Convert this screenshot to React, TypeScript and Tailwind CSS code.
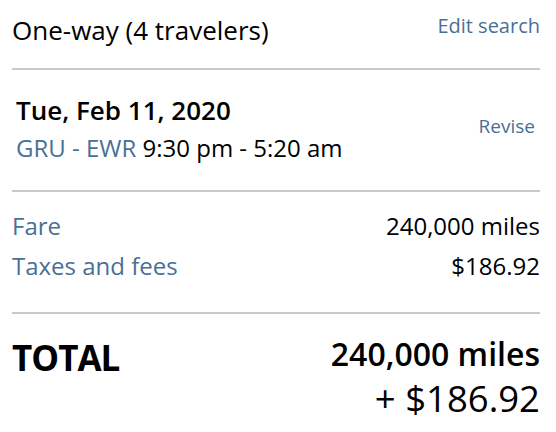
import React from 'react'

const font = { fontFamily: '"Open Sans", "Liberation Sans", sans-serif' }

const Divider = () => <div className="h-[2px] bg-[#c9c9c9]" />

export default function App() {
  return (
    <div className="w-[556px] h-[432px] bg-white pl-3 pr-4 text-black" style={font}>
      {/* header */}
      <div className="flex items-start justify-between h-[68px] pt-3">
        <h2 className="text-[26px] leading-[36px]">One-way (4 travelers)</h2>
        <a className="text-[20px] leading-[28px] text-[#4a6f96]">Edit search</a>
      </div>
      <Divider />

      {/* flight */}
      <div className="flex items-start justify-between h-[120px] pl-1 pr-[5px] pt-[23px]">
        <div>
          <p className="text-[26px] leading-[34px] font-semibold">Tue, Feb 11, 2020</p>
          <p className="text-[24px] leading-[34px] mt-1">
            <span className="text-[#4a6f96]">GRU - EWR</span> 9:30 pm - 5:20 am
          </p>
        </div>
        <a className="text-[19px] leading-[26px] text-[#4a6f96] mt-[20px]">Revise</a>
      </div>
      <Divider />

      {/* fare breakdown */}
      <div className="h-[120px] pt-[14px]">
        <div className="flex justify-between text-[24px] leading-[40px]">
          <span className="text-[#4a6f96]">Fare</span>
          <span>240,000 miles</span>
        </div>
        <div className="flex justify-between text-[24px] leading-[40px]">
          <span className="text-[#4a6f96]">Taxes and fees</span>
          <span>$186.92</span>
        </div>
      </div>
      <Divider />

      {/* total */}
      <div className="flex items-start justify-between pt-[18px]">
        <span className="text-[35px] leading-[44px] font-bold tracking-[-1px] mt-1">TOTAL</span>
        <div className="text-right">
          <p className="text-[32px] leading-[44px] font-semibold">240,000 miles</p>
          <p className="text-[36.5px] leading-[44px]">+ $186.92</p>
        </div>
      </div>
    </div>
  )
}
